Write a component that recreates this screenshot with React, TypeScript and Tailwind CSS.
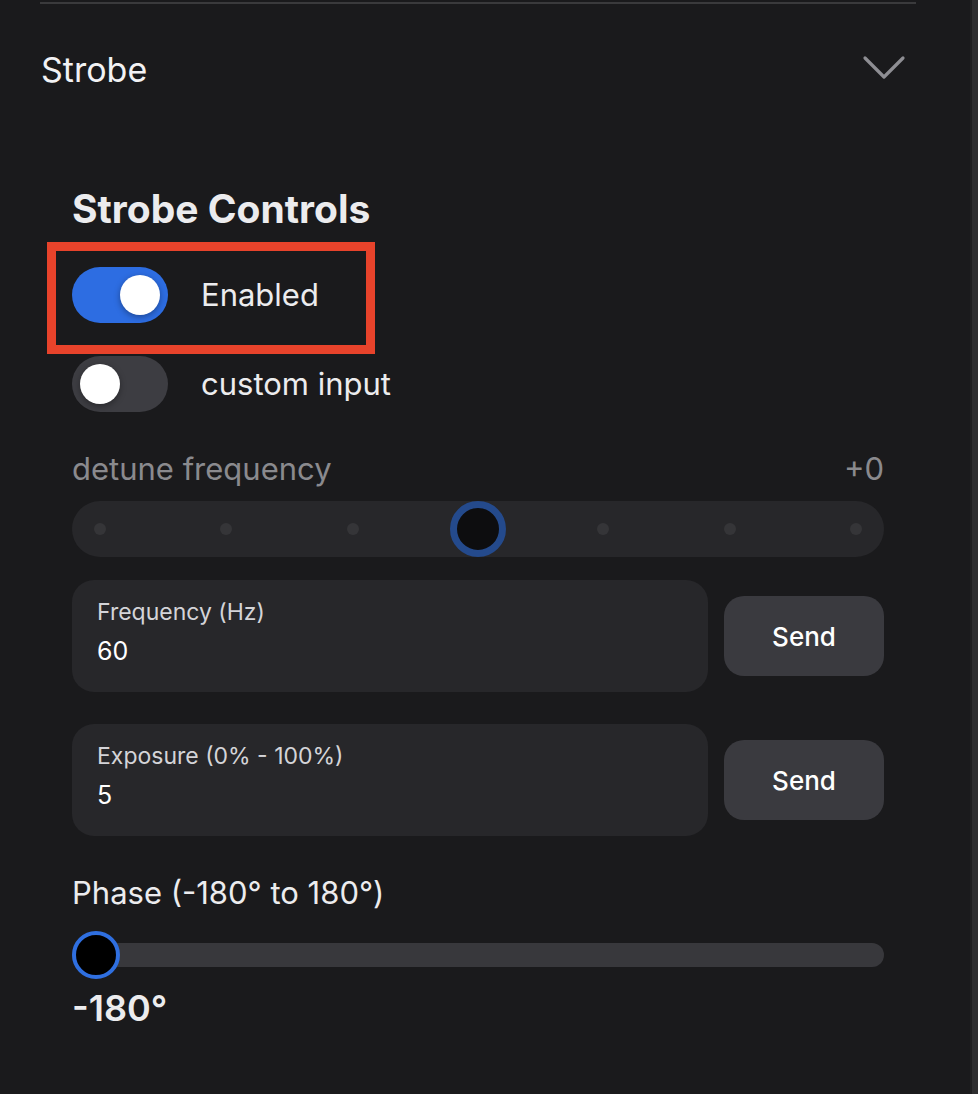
import { useState } from 'react';

function Toggle({ on }: { on: boolean }) {
  return (
    <div
      className={`w-[96px] h-[56px] rounded-full p-[8px] flex items-center ${
        on ? 'bg-[#2d6de2] justify-end' : 'bg-[#3d3d42] justify-start'
      }`}
    >
      <div className="w-[40px] h-[40px] rounded-full bg-white shadow-[0_2px_6px_rgba(0,0,0,0.35)]" />
    </div>
  );
}

function NumberField({ label, value }: { label: string; value: string }) {
  return (
    <div className="flex items-center gap-[16px]">
      <div className="flex-1 h-[112px] rounded-[22px] bg-[#27272a] px-[25px] pt-[18px]">
        <div className="text-[23px] text-[#d4d4d8] leading-[28px]">{label}</div>
        <div className="text-[25px] text-white leading-[32px] mt-[9px]">{value}</div>
      </div>
      <button className="w-[160px] h-[80px] rounded-[20px] bg-[#3a3a3f] text-white text-[26px] font-medium">
        Send
      </button>
    </div>
  );
}

export default function App() {
  const [enabled] = useState(true);
  const dots = [0, 1, 2, 3, 4, 5, 6];

  return (
    <div className="min-h-screen w-full bg-[#1a1a1c] flex font-['Inter',sans-serif]">
      <div className="flex-1 pl-[40px] pr-[54px]">
        <div className="h-[2px] mt-[2px] bg-[#3a3a3c]" />

        <div className="flex items-center justify-between h-[130px]">
          <span className="text-[34px] text-[#f2f2f4] pl-[1px]">Strobe</span>
          <svg width="44" height="26" viewBox="0 0 44 26" className="mr-[10px] -mt-[2px]">
            <path d="M3 3 L22 22 L41 3" fill="none" stroke="#8e8e93" strokeWidth="3.2" strokeLinecap="round" strokeLinejoin="round" />
          </svg>
        </div>

        <div className="pl-[32px] pr-[32px]">
          <h2 className="text-[39px] font-bold text-[#ececee] leading-[44px] mt-[53px]">Strobe Controls</h2>

          <div className="relative mt-[36px] flex items-center gap-[33px]">
            <Toggle on={enabled} />
            <span className="text-[31px] text-[#ececee]">Enabled</span>
            <div className="absolute left-[-25px] top-[-25px] w-[328px] h-[112px] border-[9px] border-[#e8432b] pointer-events-none" />
          </div>

          <div className="mt-[33px] flex items-center gap-[33px]">
            <Toggle on={false} />
            <span className="text-[31px] text-[#ececee]">custom input</span>
          </div>

          <div className="mt-[40px] flex items-center justify-between text-[31px] text-[#8a8a8e] leading-[34px]">
            <span>detune frequency</span>
            <span>+0</span>
          </div>

          <div className="mt-[15px] h-[56px] rounded-full bg-[#27272a] flex items-center justify-between px-[22px]">
            {dots.map((d) =>
              d === 3 ? (
                <div key={d} className="w-[56px] h-[56px] -mx-[23px] rounded-full border-[7px] border-[#244a8c] bg-[#0d0d0f]" />
              ) : (
                <div key={d} className="w-[12px] h-[12px] rounded-full bg-[#353538]" />
              )
            )}
          </div>

          <div className="mt-[23px] flex flex-col gap-[32px]">
            <NumberField label="Frequency (Hz)" value="60" />
            <NumberField label="Exposure (0% - 100%)" value="5" />
          </div>

          <div className="mt-[40px] text-[31px] text-[#ececee] leading-[34px]">Phase (-180° to 180°)</div>

          <div className="mt-[21px] relative h-[48px] flex items-center">
            <div className="w-full h-[24px] rounded-full bg-[#38383c]" />
            <div className="absolute left-0 top-0 w-[48px] h-[48px] rounded-full border-[4px] border-[#2f6fe0] bg-black" />
          </div>

          <div className="mt-[7px] text-[36px] font-semibold text-[#ececee] leading-[44px]">-180°</div>
        </div>
      </div>
      <div className="w-[8px] flex">
        <div className="w-[2px] bg-[#1f1f21]" />
        <div className="flex-1 bg-[#2e2e30]" />
      </div>
    </div>
  );
}
